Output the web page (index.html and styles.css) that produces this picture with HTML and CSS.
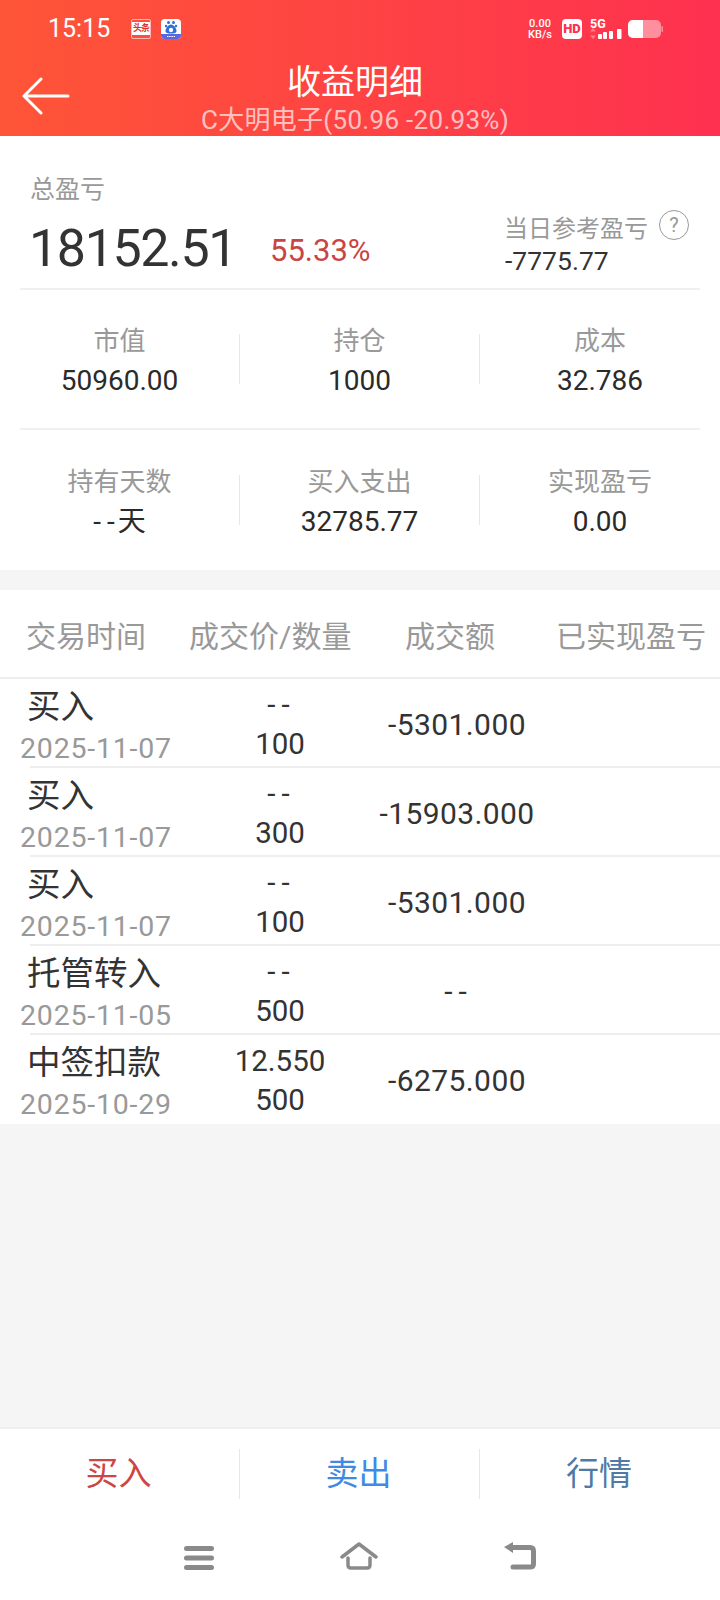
FILE: index.html
```html
<!DOCTYPE html>
<html lang="zh-CN">
<head>
    <meta charset="UTF-8">
    <meta name="viewport" content="width=device-width, initial-scale=1.0">
    <title>收益明细</title>
    <link rel="stylesheet" href="styles.css">
</head>
<body>
    <div class="page">
        <div class="header">
            <div class="status">
                <span class="time">15:15</span>
                <span class="toutiao"><i>头条</i></span>
                <svg class="baidu" width="20" height="20" viewBox="0 0 20 20">
                    <rect width="20" height="20" rx="4" fill="#fff"/>
                    <path d="M0 15h20v1a4 4 0 0 1-4 4H4a4 4 0 0 1-4-4z" fill="#5a67e0"/>
                    <circle cx="7.500" cy="3.500" r="1.500" fill="#2f6fd8"/>
                    <circle cx="12.500" cy="3.500" r="1.500" fill="#2f6fd8"/>
                    <circle cx="5" cy="7" r="1.200" fill="#2f6fd8"/>
                    <circle cx="15" cy="7" r="1.200" fill="#2f6fd8"/>
                    <path d="M10 5.500c-3 0-5.500 4-5.500 6.500 0 2 2.500 2.500 5.500 2.500s5.500-.5 5.500-2.500c0-2.500-2.500-6.500-5.500-6.500z" fill="#2f6fd8"/>
                    <circle cx="10" cy="11" r="2.200" fill="#fff"/>
                    <path d="M6 17.500h8" stroke="#fff" stroke-width="1" stroke-dasharray="1.500 .7"/>
                </svg>
                <span class="status-right">
                    <span class="speed"><b>0.00</b><b>KB/s</b></span>
                    <span class="hd">HD</span>
                    <span class="net">
                        <span class="net-label">5G</span>
                        <svg width="32" height="11" viewBox="0 0 32 11">
                            <path d="M3 0l3 3.500H0zM3 11l3-3.500H0z" fill="#fff" fill-opacity="0.35"/>
                            <rect x="8" y="6" width="4" height="5" rx="1" fill="#fff"/>
                            <rect x="13" y="4" width="4" height="7" rx="1" fill="#fff"/>
                            <rect x="19" y="3" width="4" height="8" rx="1" fill="#fff"/>
                            <rect x="27" y="1" width="4.500" height="10" rx="1" fill="#fff"/>
                        </svg>
                    </span>
                    <svg width="35" height="18" viewBox="0 0 35 18">
                        <rect width="33" height="18" rx="5" fill="#fff" fill-opacity="0.45"/>
                        <path d="M5 0h10v18H5a5 5 0 0 1-5-5V5a5 5 0 0 1 5-5z" fill="#fff"/>
                        <rect x="33.500" y="6" width="1.500" height="6" rx="0.700" fill="#fff" fill-opacity="0.45"/>
                    </svg>
                </span>
            </div>
            <div class="titlebar">
                <svg class="back" width="48" height="38" viewBox="0 0 48 38">
                    <path d="M46 19H2M19 2L2 19l17 17" fill="none" stroke="#fff" stroke-width="3" stroke-linecap="round" stroke-linejoin="round"/>
                </svg>
                <h1>收益明细</h1>
                <p>C大明电子(50.96 -20.93%)</p>
            </div>
        </div>

        <div class="summary">
            <div class="total-label">总盈亏</div>
            <div class="total">
                <span class="total-num">18152.51</span>
                <span class="total-pct">55.33%</span>
                <div class="today">
                    <div class="today-label">当日参考盈亏<span class="help">?</span></div>
                    <div class="today-num">-7775.77</div>
                </div>
            </div>
            <div class="divider"></div>
            <div class="stats">
                <div class="stat"><span>市值</span><b>50960.00</b></div>
                <div class="stat"><span>持仓</span><b>1000</b></div>
                <div class="stat"><span>成本</span><b>32.786</b></div>
            </div>
            <div class="divider"></div>
            <div class="stats stats-last">
                <div class="stat"><span>持有天数</span><b><i class="dash">--</i>天</b></div>
                <div class="stat"><span>买入支出</span><b>32785.77</b></div>
                <div class="stat"><span>实现盈亏</span><b>0.00</b></div>
            </div>
        </div>

        <div class="table">
            <div class="thead">
                <span class="th-time">交易时间</span>
                <span class="th-price">成交价/数量</span>
                <span class="th-amount">成交额</span>
                <span class="th-real">已实现盈亏</span>
            </div>
            <div class="row">
                <div class="c-name"><b>买入</b><span>2025-11-07</span></div>
                <div class="c-price"><i class="dash">--</i><span>100</span></div>
                <div class="c-amount">-5301.000</div>
            </div>
            <div class="row">
                <div class="c-name"><b>买入</b><span>2025-11-07</span></div>
                <div class="c-price"><i class="dash">--</i><span>300</span></div>
                <div class="c-amount">-15903.000</div>
            </div>
            <div class="row">
                <div class="c-name"><b>买入</b><span>2025-11-07</span></div>
                <div class="c-price"><i class="dash">--</i><span>100</span></div>
                <div class="c-amount">-5301.000</div>
            </div>
            <div class="row">
                <div class="c-name"><b>托管转入</b><span>2025-11-05</span></div>
                <div class="c-price"><i class="dash">--</i><span>500</span></div>
                <div class="c-amount"><i class="dash">--</i></div>
            </div>
            <div class="row">
                <div class="c-name"><b>中签扣款</b><span>2025-10-29</span></div>
                <div class="c-price"><span>12.550</span><span>500</span></div>
                <div class="c-amount">-6275.000</div>
            </div>
        </div>

        <div class="spacer"></div>

        <div class="actions">
            <div class="action buy">买入</div>
            <div class="action sell">卖出</div>
            <div class="action quote">行情</div>
        </div>

        <div class="navbar">
            <svg width="30" height="24" viewBox="0 0 30 24">
                <path d="M2.500 2.500h25M2.500 12h25M2.500 21.500h25" stroke="#8a8a8a" stroke-width="5" stroke-linecap="round" fill="none"/>
            </svg>
            <svg width="38" height="28" viewBox="0 0 38 28">
                <path d="M2 15L19 2l17 13" stroke="#8a8a8a" stroke-width="3.500" stroke-linecap="round" stroke-linejoin="round" fill="none"/>
                <path d="M8 16v7q0 3 3 3h16q3 0 3-3v-7" stroke="#8a8a8a" stroke-width="3.500" stroke-linecap="round" fill="none"/>
            </svg>
            <svg width="32" height="28" viewBox="0 0 32 28">
                <path d="M9 5.500h17q3.500 0 3.500 3.500v13q0 3-3.500 3H9" stroke="#8a8a8a" stroke-width="5" stroke-linecap="round" fill="none"/>
                <path d="M0 5l9-5v11z" fill="#8a8a8a"/>
            </svg>
        </div>
    </div>
</body>
</html>
```

FILE: styles.css
```css
* {
    box-sizing: border-box;
}
body {
    margin: 0;
    background: #f5f5f5;
    font-family: Roboto, "Noto Sans CJK SC", sans-serif;
}
i {
    font-style: normal;
}
.page {
    width: 720px;
    height: 1600px;
    display: flex;
    flex-direction: column;
}
.dash {
    letter-spacing: 6px;
    margin-right: -3px;
}
.header {
    height: 136px;
    background: linear-gradient(90deg, #fe5537, #fe3150);
    color: white;
}
.status {
    height: 50px;
    padding: 7px 57px 0 48px;
    display: flex;
    align-items: center;
}
.time {
    font-size: 25px;
    width: 83px;
}
.toutiao {
    width: 20px;
    height: 20px;
    margin-right: 10px;
    padding-top: 2px;
    border: 1px solid rgba(255, 255, 255, 0.6);
    border-radius: 2px;
    overflow: hidden;
}
.toutiao i {
    display: block;
    height: 13px;
    background: white;
    color: #d8342c;
    font-size: 9px;
    font-weight: 700;
    line-height: 13px;
    letter-spacing: -1px;
    text-align: center;
    white-space: nowrap;
}
.status-right {
    margin-left: auto;
    display: flex;
    align-items: center;
}
.speed {
    display: flex;
    flex-direction: column;
    align-items: center;
    width: 26px;
    font-size: 11px;
    line-height: 11px;
    margin-right: 9px;
}
.speed b {
    font-weight: 500;
}
.hd {
    width: 20px;
    height: 20px;
    margin-right: 8px;
    background: white;
    color: #fe3150;
    border-radius: 4px;
    font-size: 13px;
    font-weight: 900;
    line-height: 20px;
    text-align: center;
}
.net {
    display: flex;
    flex-direction: column;
    width: 32px;
    margin-right: 6px;
}
.net-label {
    font-size: 12.500px;
    font-weight: 700;
    line-height: 9px;
}
.titlebar {
    position: relative;
    height: 86px;
    padding-right: 10px;
    text-align: center;
}
.back {
    position: absolute;
    left: 22px;
    top: 27px;
}
.titlebar h1 {
    margin: 0;
    padding-top: 12px;
    font-size: 34px;
    font-weight: 400;
    line-height: 40px;
}
.titlebar p {
    margin: 3px 0 0;
    font-size: 26px;
    letter-spacing: 0.300px;
    line-height: 30px;
    white-space: nowrap;
    color: rgba(255, 255, 255, 0.68);
}
.summary {
    background: white;
    height: 434px;
}
.total-label {
    padding: 40px 0 0 30px;
    font-size: 25px;
    line-height: 28px;
    color: #999;
}
.total {
    display: flex;
    height: 84px;
    margin: 0 20px;
    padding: 14px 0 0 9px;
    position: relative;
}
.total-num {
    font-size: 52px;
    letter-spacing: -1.400px;
    line-height: 62px;
    color: #333;
    width: 241px;
}
.total-pct {
    font-size: 31px;
    line-height: 36px;
    margin-top: 15px;
    color: #c94444;
}
.today {
    position: absolute;
    left: 484px;
    top: 10px;
}
.today-label {
    display: flex;
    align-items: center;
    font-size: 24px;
    line-height: 30px;
    color: #999;
}
.help {
    width: 30px;
    height: 30px;
    margin: -8px 0 0 11px;
    border: 1px solid #999;
    border-radius: 50%;
    font-size: 20px;
    line-height: 28px;
    text-align: center;
}
.today-num {
    padding-left: 1px;
    font-size: 26.500px;
    line-height: 33px;
    color: #333;
}
.divider {
    height: 2px;
    margin: 0 20px;
    background: #f0f0f0;
}
.stats {
    display: flex;
    height: 138px;
    align-items: center;
}
.stats-last {
    height: 140px;
}
.stat {
    flex: 0 0 240px;
    display: flex;
    flex-direction: column;
    align-items: center;
    border-right: 1px solid #e8e8e8;
    height: 50px;
    padding-top: 4px;
    justify-content: center;
}
.stat:last-child {
    border-right: none;
}
.stat span {
    font-size: 26px;
    line-height: 40px;
    color: #999;
    white-space: nowrap;
}
.stat b {
    font-size: 28px;
    font-weight: 400;
    line-height: 40px;
    color: #2a2a2a;
    white-space: nowrap;
}
.table {
    margin-top: 20px;
    background: white;
}
.thead {
    height: 89px;
    display: flex;
    align-items: center;
    font-size: 30px;
    color: #999;
    border-bottom: 2px solid #eee;
    white-space: nowrap;
}
.th-time {
    margin-left: 26px;
    width: 163px;
}
.th-price {
    width: 216px;
}
.th-amount {
    width: 151px;
}
.row {
    height: 89px;
    display: flex;
    border-bottom: 2px solid #eee;
    margin-left: 30px;
}
.row:last-child {
    border-bottom: none;
}
.c-name {
    width: 190px;
    margin-left: -10px;
    display: flex;
    flex-direction: column;
    white-space: nowrap;
}
.c-name b {
    padding: 3px 0 0 7px;
    font-size: 33.500px;
    font-weight: 400;
    line-height: 50px;
    color: #333;
}
.c-name span {
    font-size: 28.500px;
    letter-spacing: 0.800px;
    line-height: 34px;
    color: #999;
}
.c-price {
    width: 120px;
    margin-left: 10px;
    display: flex;
    flex-direction: column;
    align-items: center;
    font-size: 29.500px;
    line-height: 39px;
    padding-top: 7px;
    color: #333;
}
.c-amount {
    width: 200px;
    margin-left: 17px;
    text-align: center;
    font-size: 30px;
    letter-spacing: 0.400px;
    line-height: 92px;
    height: 87px;
    color: #333;
}
.spacer {
    flex: 1;
}
.actions {
    height: 91px;
    display: flex;
    align-items: center;
    background: white;
    border-top: 2px solid #eee;
}
.action {
    flex: 0 0 240px;
    height: 50px;
    padding-right: 2px;
    font-size: 33px;
    line-height: 50px;
    text-align: center;
    border-right: 1px solid #e8e8e8;
}
.action:last-child {
    border-right: none;
}
.buy {
    color: #cf4545;
}
.sell {
    color: #3f8ae2;
}
.quote {
    color: #4f7aa6;
}
.navbar {
    height: 82px;
    background: white;
    display: flex;
    justify-content: center;
    align-items: flex-end;
    gap: 126px;
    padding-bottom: 30px;
}
```
